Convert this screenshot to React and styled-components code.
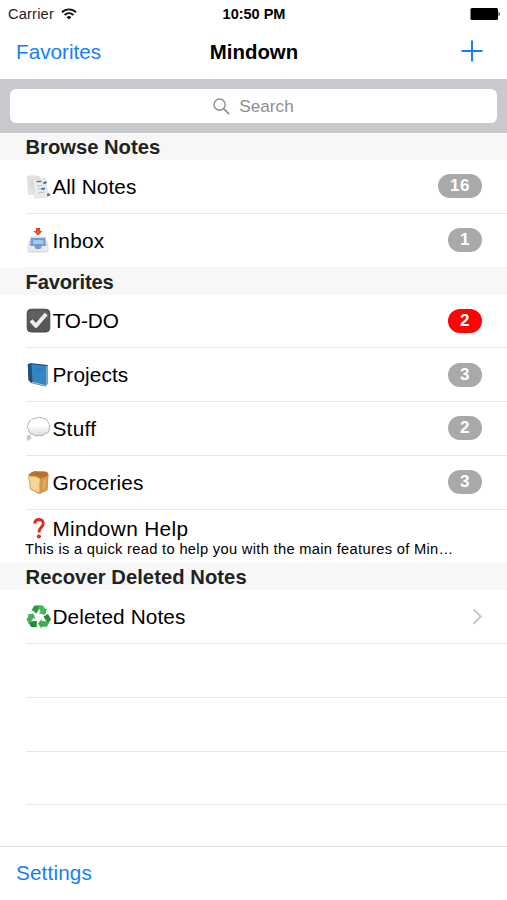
import React from "react";
import styled, { createGlobalStyle } from "styled-components";

function App() {
  return (
    <>
      <GlobalStyle />
      <Screen>
        <StatusBar>
          <Carrier>
            <span>Carrier</span>
            <WifiIcon />
          </Carrier>
          <Clock>10:50 PM</Clock>
          <BatteryIcon />
        </StatusBar>

        <NavBar>
          <NavLink>Favorites</NavLink>
          <Title>Mindown</Title>
          <AddButton aria-label="Add">
            <svg width="22" height="22" viewBox="0 0 22 22">
              <path d="M11 .5v21M.5 11h21" stroke="#147efb" strokeWidth="2" />
            </svg>
          </AddButton>
        </NavBar>

        <SearchBar>
          <SearchField>
            <svg width="17" height="17" viewBox="0 0 17 17" fill="none">
              <circle cx="6.6" cy="6.6" r="5.6" stroke="#8e8e93" strokeWidth="1.4" />
              <path d="M10.6 10.6l5.6 5.6" stroke="#8e8e93" strokeWidth="1.7" />
            </svg>
            <Placeholder>Search</Placeholder>
          </SearchField>
        </SearchBar>

        <List>
          <SectionHeader>Browse Notes</SectionHeader>
          <Row>
            <NotesIcon />
            <Label>All Notes</Label>
            <Badge>16</Badge>
          </Row>
          <Row $last>
            <InboxIcon />
            <Label $track="0.2px">Inbox</Label>
            <Badge>1</Badge>
          </Row>

          <SectionHeader $track="-0.2px">Favorites</SectionHeader>
          <Row>
            <CheckIcon />
            <Label $track="0">TO-DO</Label>
            <Badge $alert>2</Badge>
          </Row>
          <Row>
            <BookIcon />
            <Label>Projects</Label>
            <Badge>3</Badge>
          </Row>
          <Row>
            <ThoughtIcon />
            <Label $track="0.3px">Stuff</Label>
            <Badge>2</Badge>
          </Row>
          <Row>
            <BreadIcon />
            <Label>Groceries</Label>
            <Badge>3</Badge>
          </Row>
          <HelpRow>
            <HelpTitle>
              <QuestionIcon />
              <Label $track="0.35px">Mindown Help</Label>
            </HelpTitle>
            <Subtitle>
              This is a quick read to help you with the main features of Min…
            </Subtitle>
          </HelpRow>

          <SectionHeader $track="0.06px">Recover Deleted Notes</SectionHeader>
          <Row>
            <RecycleIcon />
            <Label>Deleted Notes</Label>
            <Chevron width="11" height="17" viewBox="0 0 11 17" fill="none">
              <path d="M1.5 1.2l7.3 7.3-7.3 7.3" stroke="#c7c7cc" strokeWidth="2" />
            </Chevron>
          </Row>
          <Row />
          <Row />
          <Row />
        </List>

        <Toolbar>
          <NavLink $track="0.15px">Settings</NavLink>
        </Toolbar>
      </Screen>
    </>
  );
}

function WifiIcon() {
  return (
    <svg width="16" height="12" viewBox="0 0 16 12" fill="none" stroke="#111">
      <path d="M1 4.2a10 10 0 0 1 14 0" strokeWidth="1.9" />
      <path d="M3.6 7a6.3 6.3 0 0 1 8.8 0" strokeWidth="1.8" />
      <path d="M8 11.6L5.6 9.2a3.5 3.5 0 0 1 4.8 0z" fill="#111" stroke="none" />
    </svg>
  );
}

function BatteryIcon() {
  return (
    <svg width="31" height="12" viewBox="0 0 31 12">
      <rect x="0.5" y="0" width="27.5" height="12" rx="1.5" fill="#000" />
      <path d="M28.6 4c1.5.3 1.5 3.7 0 4z" fill="#000" />
    </svg>
  );
}

function NotesIcon() {
  return (
    <Emoji viewBox="0 0 25 25">
      <path d="M1.5 2.5l5-1 7 1 1 17-12 1z" fill="#e3e4e5" stroke="#cccdce" strokeWidth=".5" />
      <path d="M4 7h6M4 10h5M4 13h5" stroke="#c9cbcd" />
      <path d="M7 5.5l12-1 3.5 18.5-14 .8z" fill="#ececed" stroke="#cfd0d2" strokeWidth=".6" />
      <path d="M10 6.9l5-.5 1 1.5-5 .7z" fill="#77797b" />
      <path d="M11 12l5-.5M12 15l4-.5M12 19l7-1" stroke="#bfc1c4" />
      <path d="M17 8.5l3.3-1.5.5 2.2-3.3 1zM15.3 14l3.4-.6.5 2.2-3.4.5zM20.8 19.8l2.9-.5.4 2.3-2.8.6z" fill="#2e76bd" />
    </Emoji>
  );
}

function InboxIcon() {
  return (
    <Emoji viewBox="0 0 25 25">
      <path d="M5 9h14l3 9v5q0 1-1 1H3q-1 0-1-1v-5z" fill="#e4e7ec" stroke="#c6cad1" strokeWidth=".7" />
      <path d="M5 10h14l1 8h-4l-1.5 3h-5L8 18H4z" fill="#6f9fd5" />
      <path d="M7.5 12h9.5l.8 4H6.8z" fill="#a9c8e9" />
      <path d="M2.5 18H8l1.5 3h5.5L16.5 18h5v5h-19z" fill="#e9ebef" />
      <path d="M10 0h4v3h2.5L12 7.5 7.5 3H10z" fill="#e8431d" />
      <path d="M11 3.6h2l-1 2z" fill="#ff9a4e" />
    </Emoji>
  );
}

function CheckIcon() {
  return (
    <Emoji viewBox="0 0 25 25">
      <rect x="1.2" y="1.2" width="22.6" height="22.8" rx="4" fill="#555657" stroke="#48494a" />
      <path d="M3 3h19v8H3z" fill="#68696a" opacity=".55" />
      <path d="M5 12.5l5 5.3L20.2 6" fill="none" stroke="#ededed" strokeWidth="4" strokeLinejoin="round" />
    </Emoji>
  );
}

function BookIcon() {
  return (
    <Emoji viewBox="0 0 25 25">
      <path d="M1.8 2.5L4 1l18 2v18.5L19.5 24.5 5 21 2.5 18z" fill="#235780" />
      <path d="M5.5 20.7L19.5 24l2-3L7 18.5z" fill="#b9cbd6" />
      <path d="M5.2 2.3L20 4.2v19L6.5 20z" fill="#3386c4" />
      <path d="M20 4.2l2-1v18L20 23.4z" fill="#7fa5bf" />
      <path d="M1.8 2.5l3.4-.2L6.5 20l-1.5.6-2.5-2.6z" fill="#1e5178" />
      <path d="M9 6.3l7.5 1v2L9 8.3z" fill="#277ab7" />
    </Emoji>
  );
}

function ThoughtIcon() {
  return (
    <Emoji viewBox="0 0 25 25">
      <defs>
        <linearGradient id="cloud" x1="0" y1="0" x2="0" y2="1">
          <stop offset=".45" stopColor="#fff" />
          <stop offset="1" stopColor="#d9d9dc" />
        </linearGradient>
      </defs>
      <path
        d="M5 4.7Q6.5 1.8 10 2.3Q13.5 .2 17 2.3Q21 2 21.7 5.5Q25 8.5 23.2 12.5Q23.5 17 19.5 17.4Q17 21 13 19.3Q9 21.3 7 18.2Q2.7 18.5 2.8 14.4Q0 11.5 2.3 8Q2 5 5 4.7z"
        fill="url(#cloud)"
        stroke="#aaaaad"
        strokeWidth=".9"
      />
      <circle cx="3" cy="21.4" r="1.7" fill="#ddd" stroke="#999" strokeWidth=".8" />
      <circle cx="1.6" cy="24" r=".7" fill="#aaa" />
    </Emoji>
  );
}

function BreadIcon() {
  return (
    <Emoji viewBox="0 0 25 25">
      <path d="M3 5L8 1.5h11q4 1 3.5 4l-1 14.5-8.5 4-9-5z" fill="#c48338" />
      <path d="M2.3 6Q3 3 8 1.3l12 .5q3 1 2 4L14 8Q8 4.8 2.3 6z" fill="#b9712c" />
      <path d="M2.8 6.2Q10 5.5 13.8 8.5 15 10 13.8 12v11.3L4.3 19 3.7 11Q1.6 9 2.8 6.2z" fill="#f3d595" stroke="#d49f52" strokeWidth=".8" />
      <path d="M14.2 9l8-3-1 14.5-7 3.3z" fill="#d59a4b" />
      <path d="M17 10.5l3-1-.7 9-2.3 1z" fill="#dfac63" />
    </Emoji>
  );
}

function QuestionIcon() {
  return (
    <Emoji viewBox="0 0 25 25">
      <path
        d="M8.6 7.6Q9.3 3.4 13 3.4Q17.6 3.6 17.1 8Q16.6 10.2 14.8 11.8Q13 13.4 13 16.4"
        fill="none"
        stroke="#db2e20"
        strokeWidth="3"
      />
      <circle cx="12.9" cy="20.6" r="2" fill="#db2e20" />
    </Emoji>
  );
}

function RecycleIcon() {
  return (
    <Emoji viewBox="0 0 25 25">
      <path d="M5.5 6L8.5 1.5h6.2l-4 8z" fill="#2f9944" />
      <path d="M12 1.5h5l2.3 3.8 1.8-.8-2 6.5-6.5-1.8 2-1.2z" fill="#45b757" />
      <path d="M17.5 12.5L22 10l3 5.2-3 4.8z" fill="#248c3a" />
      <path d="M23.5 17.5L21 22.8h-5.3V25L12 19.5l3.7-4.8v2.2z" fill="#3dad4e" />
      <path d="M10.8 17v6H5l-3-5.5z" fill="#258c39" />
      <path d="M3 20L.5 15.5l2.2-4L.8 10.4l6.5-1L9.6 15l-2-.9z" fill="#42b353" />
    </Emoji>
  );
}

export default App;

const GlobalStyle = createGlobalStyle`
  * {
    box-sizing: border-box;
  }

  body {
    margin: 0;
    background: #fff;
    font-family: "Liberation Sans", Arial, sans-serif;
    -webkit-font-smoothing: antialiased;
  }
`;

const Screen = styled.div`
  width: 507px;
  height: 900px;
  display: flex;
  flex-direction: column;
  overflow: hidden;
  background: #fff;
  color: #000;
`;

const StatusBar = styled.div`
  height: 27px;
  padding: 0 7px 0 8px;
  display: grid;
  grid-template-columns: 1fr auto 1fr;
  align-items: center;
  font-size: 14.7px;

  & > svg {
    justify-self: end;
    margin-right: -1px;
  }
`;

const Carrier = styled.div`
  display: flex;
  align-items: center;
  gap: 7px;
  color: #222;
  letter-spacing: 0.15px;
`;

const Clock = styled.div`
  font-size: 14.5px;
  font-weight: bold;
`;

const NavBar = styled.div`
  height: 52px;
  padding: 0 24px 2px 16px;
  display: flex;
  align-items: center;
  justify-content: space-between;
`;

const NavLink = styled.a`
  flex: 0 0 170px;
  font-size: 20.7px;
  color: #147efb;
  cursor: pointer;
  letter-spacing: ${(props) => props.$track || "0"};
`;

const Title = styled.h1`
  flex: 1;
  margin: 0;
  font-size: 20.4px;
  font-weight: bold;
  text-align: center;
`;

const AddButton = styled.button`
  flex: 0 0 161px;
  display: flex;
  justify-content: flex-end;
  padding: 0 0 2px;
  border: 0;
  background: none;
  cursor: pointer;
`;

const SearchBar = styled.div`
  height: 54px;
  padding: 10px 10px 9px;
  background: #c9c9ce;
`;

const SearchField = styled.div`
  height: 34px;
  display: flex;
  align-items: center;
  justify-content: center;
  gap: 9px;
  border-radius: 6px;
  background: #fff;
`;

const Placeholder = styled.span`
  font-size: 17.2px;
  color: #8e8e93;
`;

const List = styled.div`
  flex: 1;
`;

const SectionHeader = styled.h2`
  height: 27px;
  margin: 0;
  padding-left: 25.5px;
  background: #f7f7f7;
  color: #222;
  font-size: 20.2px;
  font-weight: bold;
  line-height: 28px;
  letter-spacing: ${(props) => props.$track || "0"};
`;

const Row = styled.div`
  height: 53.75px;
  margin-left: 26px;
  padding-right: 25px;
  display: flex;
  align-items: center;
  border-bottom: 1px solid ${(props) => (props.$last ? "#f0f0f0" : "#e8e8e9")};
`;

const Label = styled.span`
  padding-top: 1px;
  font-size: 20.8px;
  line-height: 24px;
  letter-spacing: ${(props) => props.$track || "0.1px"};
`;

const Emoji = styled.svg`
  width: 25px;
  height: 25px;
  margin-right: 1.4px;
  flex-shrink: 0;
`;

const Badge = styled.span`
  min-width: 34px;
  height: 24px;
  margin-left: auto;
  padding: 0 12px;
  border-radius: 12px;
  background: ${(props) => (props.$alert ? "#fd0505" : "#a9a9a9")};
  color: #fff;
  font-size: 17px;
  font-weight: bold;
  line-height: 24px;
  text-align: center;
  letter-spacing: 0.5px;
`;

const HelpRow = styled.div`
  height: 53.75px;
  padding: 6px 0 0 25px;
`;

const HelpTitle = styled.div`
  height: 25px;
  padding-left: 1px;
  display: flex;
  align-items: center;
`;

const Subtitle = styled.div`
  font-size: 14.7px;
  line-height: 17px;
  letter-spacing: 0.31px;
  white-space: nowrap;
`;

const Chevron = styled.svg`
  margin-left: auto;
  margin-right: -1px;
`;

const Toolbar = styled.div`
  height: 54px;
  padding: 0 16px 1px;
  display: flex;
  align-items: center;
  border-top: 1px solid #e2e2e2;
`;
